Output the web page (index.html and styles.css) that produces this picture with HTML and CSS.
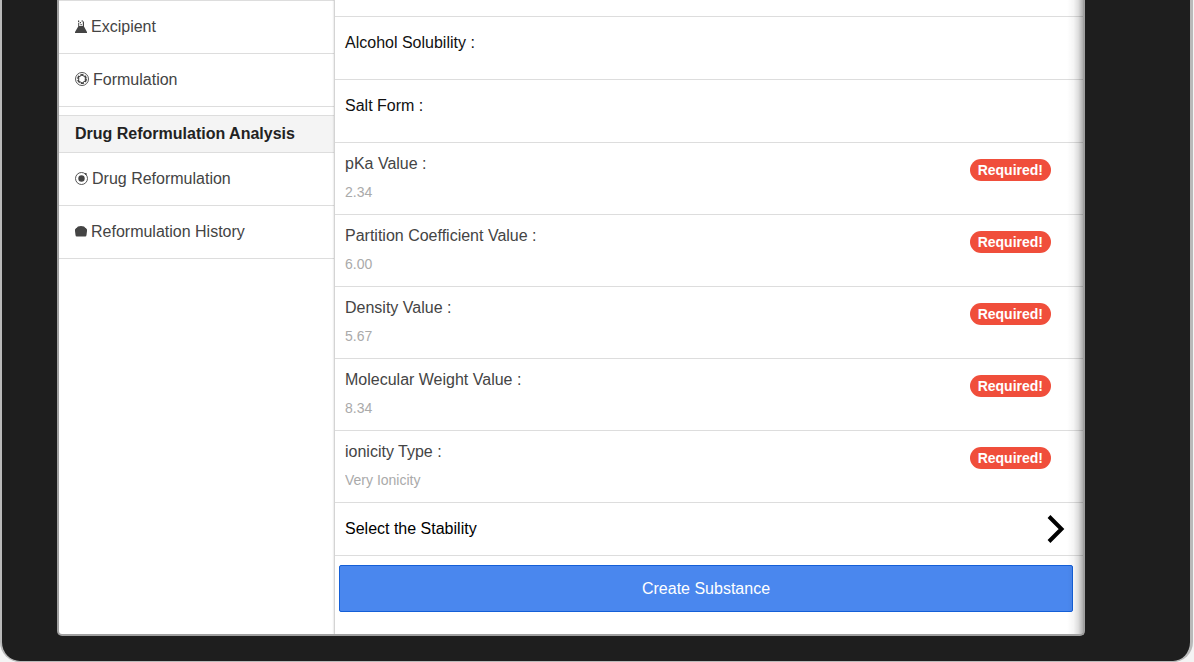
FILE: index.html
```html
<!DOCTYPE html>
<html lang="en">
<head>
<meta charset="utf-8">
<title>Create Substance</title>
<link rel="stylesheet" href="styles.css">
</head>
<body>
<div class="device">
  <div class="screen">
    <nav class="menu">
      <ul class="menu-list">
        <li><a class="menu-item" href="#excipient">
          <svg class="icon" width="12" height="14" viewBox="0 0 12 14" aria-hidden="true"><path d="M3 .500h1.200v1.500H3zM6.500 .500h1.500v1H6.500zM4.800 2h1.200v1.200H4.800zM3.200 2.800h1V6h3.600V1.500H9V6.500L12 12v1H0v-1l3.200-5.500zM5.500 4h1.200v1.200H5.500z"/></svg>
          <span>Excipient</span></a></li>
        <li><a class="menu-item" href="#formulation">
          <svg class="icon" width="14" height="16" viewBox="0 0 14 16" aria-hidden="true"><g fill="none" stroke="currentColor"><circle cx="7" cy="7" r="6.500" stroke-width="0.900"/><circle cx="7" cy="7" r="4.100" stroke-width="1.700" stroke-dasharray="3.100 1.193"/><path d="M6.500 2.500l2.800 2M10.500 4.500l-.3 3.500M11 8.500l-3 1.800M7.500 11.500l-2.800-2M3.500 9.500l.3-3.500M3 5.500l3-1.800" stroke-width="1"/></g></svg>
          <span>Formulation</span></a></li>
      </ul>
      <h2 class="menu-heading">Drug Reformulation Analysis</h2>
      <ul class="menu-list">
        <li><a class="menu-item" href="#reformulation">
          <svg class="icon" width="13" height="15" viewBox="0 0 13 15" aria-hidden="true"><circle cx="6.500" cy="6.500" r="6" fill="none" stroke="currentColor" stroke-width="0.900"/><circle cx="6.500" cy="6.500" r="3.200"/><circle cx="10.800" cy="2" r="1"/></svg>
          <span>Drug Reformulation</span></a></li>
        <li><a class="menu-item" href="#history">
          <svg class="icon" width="12" height="14" viewBox="0 0 12 14" aria-hidden="true"><path d="M3 1.500Q6 .500 9 1.500L10.500 3h-9zM1.200 3h9.600L12 4.500V6l-.500 4q-.100 1.500-1.300 1.500H1.800Q.600 11.500.500 10L0 6V4.500z"/></svg>
          <span>Reformulation History</span></a></li>
      </ul>
    </nav>
    <main class="content">
      <form class="form">
        <div class="plain-row">Alcohol Solubility :</div>
        <div class="plain-row">Salt Form :</div>
        <div class="field">
          <div class="field-body"><label for="pka">pKa Value :</label><input id="pka" type="text" placeholder="2.34"></div>
          <span class="badge">Required!</span>
        </div>
        <div class="field">
          <div class="field-body"><label for="partition">Partition Coefficient Value :</label><input id="partition" type="text" placeholder="6.00"></div>
          <span class="badge">Required!</span>
        </div>
        <div class="field">
          <div class="field-body"><label for="density">Density Value :</label><input id="density" type="text" placeholder="5.67"></div>
          <span class="badge">Required!</span>
        </div>
        <div class="field">
          <div class="field-body"><label for="weight">Molecular Weight Value :</label><input id="weight" type="text" placeholder="8.34"></div>
          <span class="badge">Required!</span>
        </div>
        <div class="field">
          <div class="field-body"><label for="ionicity">ionicity Type :</label><input id="ionicity" type="text" placeholder="Very Ionicity"></div>
          <span class="badge">Required!</span>
        </div>
        <a class="link-row" href="#stability">
          <span>Select the Stability</span>
          <svg width="18" height="28" viewBox="0 0 18 28" aria-hidden="true"><path d="M2 1.500L14.500 14 2 26.500" fill="none" stroke="currentColor" stroke-width="4"/></svg>
        </a>
        <button class="submit" type="button">Create Substance</button>
      </form>
    </main>
  </div>
</div>
</body>
</html>
```
FILE: styles.css
```css
* {
  box-sizing: border-box;
}

body {
  margin: 0;
  background: #f4f4f4;
  color: #111;
  font: 16px/20px "Liberation Sans", Arial, sans-serif;
}

.device {
  display: flex;
  min-height: 100vh;
  margin-right: 1px;
  padding: 0 105px 25px 55px;
  border: solid #b9b9b9;
  border-width: 0 3px 1px 2px;
  border-radius: 0 0 20px 20px;
  background: #1e1e1e;
}

.screen {
  position: relative;
  display: flex;
  flex: 1;
  overflow: hidden;
  border: solid #a0a0a0;
  border-width: 0 2px 2px;
  border-radius: 0 0 5px 5px;
  background: #fff;
}

/* Shade cast along the right edge of the screen */
.screen::after {
  content: "";
  position: absolute;
  inset: 0 0 0 auto;
  width: 16px;
  background: linear-gradient(to right, rgba(0, 0, 0, 0), rgba(0, 0, 0, 0.04) 40%, rgba(0, 0, 0, 0.13) 70%, rgba(0, 0, 0, 0.32));
  pointer-events: none;
}

.menu {
  flex: 0 0 275px;
  border-top: 1px solid #ddd;
}

.menu-list {
  margin: 0;
  padding: 0;
  list-style: none;
}

.menu-item {
  display: flex;
  align-items: center;
  gap: 4px;
  padding: 16px;
  border-bottom: 1px solid #ddd;
  color: #444;
  text-decoration: none;
}

.icon {
  flex: none;
  fill: currentColor;
}

.menu-heading {
  margin: 8px 0 0;
  padding: 8px 16px;
  border: solid #ddd;
  border-width: 1px 0;
  background: #f4f4f4;
  color: #222;
  font-size: 16px;
  line-height: 20px;
}

.content {
  flex: 1;
  min-width: 0;
  padding-top: 16px;
  border-left: 1px solid #d4d4d4;
  box-shadow: 0 0 2px rgba(0, 0, 0, 0.2);
}

.form {
  display: flex;
  flex-direction: column;
  border-top: 1px solid #ddd;
}

.plain-row {
  padding: 16px 10px 26px;
  border-bottom: 1px solid #ddd;
}

.field {
  display: flex;
  align-items: flex-start;
  padding: 11px 32px 12px 10px;
  border-bottom: 1px solid #ddd;
}

.field-body {
  display: flex;
  flex: 1;
  flex-direction: column;
  gap: 8px;
  color: #444;
}

.field input {
  height: 20px;
  padding: 0;
  border: 0;
  outline: 0;
  background: none;
  color: #444;
  font: 14px/20px "Liberation Sans", Arial, sans-serif;
}

.field input::placeholder {
  color: #aaa;
  opacity: 1;
}

.badge {
  margin-top: 5px;
  padding: 3px 8px;
  border-radius: 11px;
  background: #f04e3b;
  color: #fff;
  font-size: 14px;
  font-weight: bold;
  line-height: 16px;
}

.link-row {
  display: flex;
  align-items: center;
  justify-content: space-between;
  padding: 12px 18px 12px 10px;
  border-bottom: 1px solid #ddd;
  color: #000;
  text-decoration: none;
}

.submit {
  margin: 9px 10px 22px 4px;
  padding: 0 12px;
  border: 1px solid #145fd7;
  border-radius: 2px;
  background: #4a87ee;
  color: #fff;
  font: 16px/45px "Liberation Sans", Arial, sans-serif;
}
```
